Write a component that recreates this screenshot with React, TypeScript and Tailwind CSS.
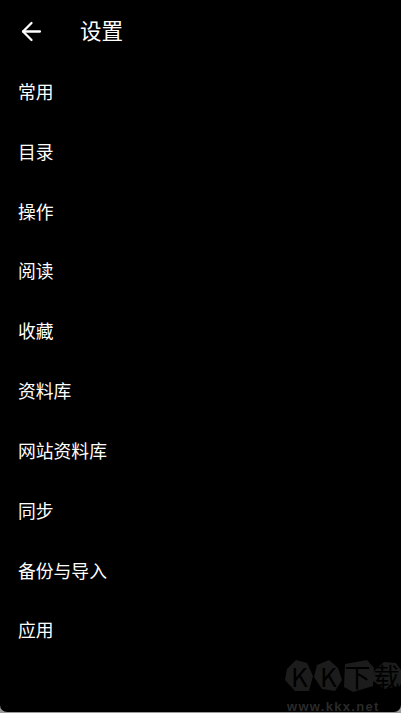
import { ArrowLeft } from "lucide-react";

const items = ["常用", "目录", "操作", "阅读", "收藏", "资料库", "网站资料库", "同步", "备份与导入", "应用"];

// Watermark tiles: blob outline + real text on top
const marks = [
  { ch: "K", points: "2,9 11,0 22,3 28,16 24,31 10,31 0,20" },
  { ch: "K", points: "3,5 15,0 24,8 28,20 21,31 8,29 0,17" },
  { ch: "下", points: "2,4 24,0 31,8 30,26 10,32 1,27" },
  { ch: "载", points: "2,11 12,2 24,3 32,14 28,26 12,29 0,20" },
];

export default function App() {
  return (
    <div
      className="relative h-[713px] w-[401px] overflow-hidden bg-[#9a9a9a] antialiased"
      style={{ fontFamily: '"Noto Sans CJK SC", sans-serif' }}
    >
      <div className="flex h-[712px] flex-col rounded-b-[7px] bg-black text-white">
        {/* Header */}
        <div className="flex h-[61.8px] items-center">
          <ArrowLeft className="ml-[17px] mt-[1px] h-[29px] w-[29px]" strokeWidth={1.9} />
          <span className="mb-[2px] ml-[34px] text-[21.5px] leading-none">设置</span>
        </div>

        {/* Menu */}
        {items.map((item) => (
          <div key={item} className="flex h-[59.85px] items-center pl-[18px] text-[17.8px] leading-none">
            {item}
          </div>
        ))}
      </div>

      {/* Watermark */}
      <div className="absolute left-[285px] top-[660px] flex w-[116px] flex-col">
        <div className="flex">
          {marks.map((m, i) => (
            <div key={i} className="relative flex h-[32px] w-[29px] items-center justify-center">
              <svg className="absolute inset-0" width="32" height="32" viewBox="0 0 32 32">
                <polygon points={m.points} fill="#1c1c1c" />
              </svg>
              <span className="relative text-[26px] leading-none text-black">{m.ch}</span>
            </div>
          ))}
        </div>
        <div
          className="ml-[2px] mt-[8px] text-[13px] font-bold leading-none tracking-[1.3px] text-[#2a2a2a]"
          style={{ fontFamily: '"Liberation Sans", sans-serif' }}
        >
          www.kkx.net
        </div>
      </div>
    </div>
  );
}
